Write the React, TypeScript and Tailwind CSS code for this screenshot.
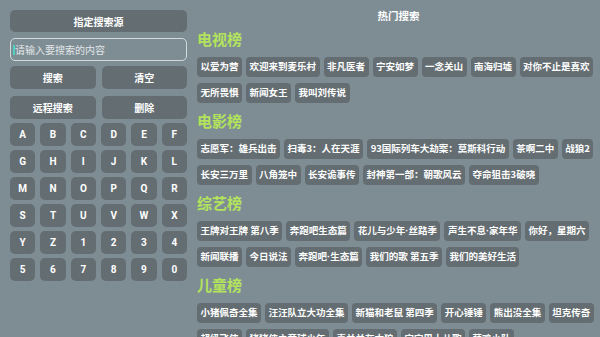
const keys = 'ABCDEFGHIJKLMNOPQRSTUVWXYZ1234567890'.split('')

const sections: { title: string; rows: string[][] }[] = [
  {
    title: '电视榜',
    rows: [
      ['以爱为营', '欢迎来到麦乐村', '非凡医者', '宁安如梦', '一念关山', '南海归墟', '对你不止是喜欢'],
      ['无所畏惧', '新闻女王', '我叫刘传说'],
    ],
  },
  {
    title: '电影榜',
    rows: [
      ['志愿军：雄兵出击', '扫毒3：人在天涯', '93国际列车大劫案：莫斯科行动', '茶啊二中', '战狼2'],
      ['长安三万里', '八角笼中', '长安诡事传', '封神第一部：朝歌风云', '夺命狙击3破晓'],
    ],
  },
  {
    title: '综艺榜',
    rows: [
      ['王牌对王牌 第八季', '奔跑吧生态篇', '花儿与少年·丝路季', '声生不息·家年华', '你好，星期六'],
      ['新闻联播', '今日说法', '奔跑吧·生态篇', '我们的歌 第五季', '我们的美好生活'],
    ],
  },
  {
    title: '儿童榜',
    rows: [
      ['小猪佩奇全集', '汪汪队立大功全集', '新猫和老鼠 第四季', '开心锤锤', '熊出没全集', '坦克传奇'],
      ['超级飞侠', '猪猪侠之竞球少年', '喜羊羊灰太狼', '宝宝巴士儿歌', '萌鸡小队'],
    ],
  },
]

function Btn({ label }: { label: string }) {
  return (
    <div className="flex h-[23px] items-center justify-center rounded-[5px] bg-[#646d72] text-[10px] font-bold text-white">
      {label}
    </div>
  )
}

// the middle dot is full width in the CJK font, draw it narrow
function ChipText({ text }: { text: string }) {
  const parts = text.split('·')
  return (
    <>
      {parts.map((p, i) => (
        <span key={i}>
          {i > 0 && <span className="font-['Liberation_Sans',sans-serif]">·</span>}
          {p}
        </span>
      ))}
    </>
  )
}

export default function App() {
  return (
    <div className="flex h-[337px] w-[600px] overflow-hidden bg-[#7e8d94] font-['Noto_Sans_CJK_SC','Noto_Sans',sans-serif] text-white">
      {/* left: search panel */}
      <div className="ml-[10px] mt-[10px] flex w-[177px] shrink-0 flex-col">
        <div className="flex h-[22px] items-center justify-center rounded-[5px] bg-[#646d72] text-[10px] font-bold">
          指定搜索源
        </div>

        <div className="mt-[6px] flex h-[23px] items-center rounded-[5px] border border-[#d3dadd] pl-[2px]">
          <span className="h-[10px] w-[2px] bg-[#4fd1c0]" />
          <span className="text-[10px] leading-none text-[#e2e6e8]">请输入要搜索的内容</span>
        </div>

        <div className="mt-[5px] grid grid-cols-2 gap-[6px]">
          <Btn label="搜索" />
          <Btn label="清空" />
        </div>
        <div className="mt-[7px] grid grid-cols-2 gap-[6px]">
          <Btn label="远程搜索" />
          <Btn label="删除" />
        </div>

        <div className="mt-[4px] grid grid-cols-6 gap-x-[5px] gap-y-[4px]">
          {keys.map((k) => (
            <div
              key={k}
              className="flex h-[23px] items-center justify-center rounded-[5px] bg-[#646d72] font-['Roboto','Noto_Sans',sans-serif] text-[10px] font-bold"
            >
              {k}
            </div>
          ))}
        </div>
      </div>

      {/* right: hot search */}
      <div className="ml-[10px] flex min-w-0 flex-1 flex-col overflow-hidden">
        <div className="mt-[10px] h-[12px] text-center text-[10.5px] font-bold leading-[12px]">
          热门搜索
        </div>

        {sections.map((s, i) => (
          <div key={s.title} className={i === 0 ? 'mt-[6.5px]' : 'mt-[8px]'}>
            <div className="h-[20px] text-[15px] font-bold leading-[20px] text-[#b3e35c]">
              {s.title}
            </div>
            <div className="mt-[8px] flex flex-col gap-[6px]">
              {s.rows.map((row, r) => (
                <div key={r} className="flex gap-[4px] whitespace-nowrap">
                  {row.map((t) => (
                    <div
                      key={t}
                      className="flex h-[20px] shrink-0 items-center rounded-[4px] bg-[#646d72] px-[3.5px] text-[9.5px] font-bold leading-none"
                    >
                      <ChipText text={t} />
                    </div>
                  ))}
                </div>
              ))}
            </div>
          </div>
        ))}
      </div>
    </div>
  )
}
